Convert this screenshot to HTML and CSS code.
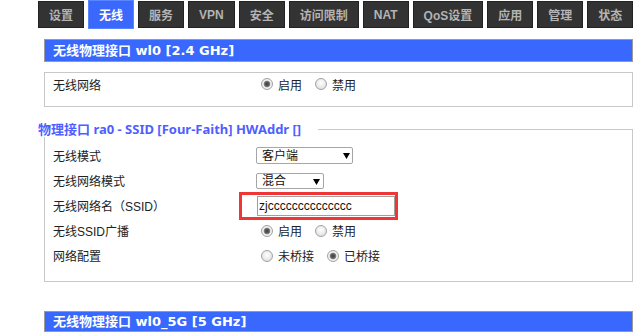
FILE: index.html
```html
<!DOCTYPE html>
<html lang="zh-CN">
<head>
<meta charset="utf-8">
<title>无线设置</title>
<link rel="stylesheet" href="styles.css">
</head>
<body>
<nav class="tabs">
  <a class="tab">设置</a>
  <a class="tab tab-active">无线</a>
  <a class="tab">服务</a>
  <a class="tab">VPN</a>
  <a class="tab">安全</a>
  <a class="tab">访问限制</a>
  <a class="tab">NAT</a>
  <a class="tab">QoS设置</a>
  <a class="tab">应用</a>
  <a class="tab">管理</a>
  <a class="tab">状态</a>
</nav>
<main class="content">
  <div class="bar">无线物理接口 wl0 [2.4 GHz]</div>

  <fieldset class="box box-plain">
    <div class="row row-short">
      <span class="label">无线网络</span>
      <span class="value">
        <input class="radio" type="radio" name="net" checked><span class="opt">启用</span>
        <input class="radio" type="radio" name="net"><span class="opt">禁用</span>
      </span>
    </div>
  </fieldset>

  <fieldset class="box box-legend">
    <legend class="legend">物理接口 ra0 - SSID [Four-Faith] HWAddr []</legend>
    <div class="row">
      <span class="label">无线模式</span>
      <span class="value"><select class="select select-wide"><option>客户端</option></select></span>
    </div>
    <div class="row">
      <span class="label">无线网络模式</span>
      <span class="value"><select class="select select-narrow"><option>混合</option></select></span>
    </div>
    <div class="row row-ssid">
      <span class="label">无线网络名（SSID）</span>
      <span class="value"><input class="text" type="text" value="zjcccccccccccccc"></span>
      <span class="highlight"></span>
    </div>
    <div class="row">
      <span class="label">无线SSID广播</span>
      <span class="value">
        <input class="radio" type="radio" name="bc" checked><span class="opt">启用</span>
        <input class="radio" type="radio" name="bc"><span class="opt">禁用</span>
      </span>
    </div>
    <div class="row">
      <span class="label">网络配置</span>
      <span class="value">
        <input class="radio" type="radio" name="br"><span class="opt">未桥接</span>
        <input class="radio" type="radio" name="br" checked><span class="opt">已桥接</span>
      </span>
    </div>
  </fieldset>

  <div class="bar bar-bottom">无线物理接口 wl0_5G [5 GHz]</div>
</main>
</body>
</html>
```

FILE: styles.css
```css
html, body {
  margin: 0;
  padding: 0;
  background: #fff;
}

body {
  font-family: "Liberation Sans", "Noto Sans CJK SC", sans-serif;
  font-size: 12px;
  color: #222;
  overflow: hidden;
  text-spacing-trim: space-all;
}

.tabs {
  display: flex;
  align-items: flex-start;
  padding: 1px 0 0 38px;
  height: 27px;
  white-space: nowrap;
}

.tab {
  flex: none;
  display: flex;
  align-items: center;
  justify-content: center;
  height: 25px;
  padding: 0 10px;
  margin-right: 4px;
  background: #333;
  border: 1px solid #222;
  color: #b4b4b4;
  font-family: "Liberation Sans", "Noto Sans CJK SC", sans-serif;
  font-weight: bold;
  font-size: 12px;
}

.tab-active {
  height: 27px;
  margin-top: -1px;
  background: #3a68fd;
  border-color: #5a85ff;
  color: #fff;
}

.content {
  margin-left: 44px;
  width: 589px;
}

.bar {
  margin-top: 11px;
  height: 21px;
  box-sizing: content-box;
  line-height: 21px;
  padding-left: 8px;
  background: #3868fd;
  border: 1px solid #9a9a9a;
  color: #fff;
  font-family: "DejaVu Sans", "Noto Sans CJK SC", sans-serif;
  font-weight: bold;
  font-size: 13px;
  white-space: nowrap;
}

.bar-bottom {
  margin-top: 29px;
  height: 19px;
  line-height: 19px;
}

.box {
  margin: 0;
  min-width: 0;
  border: 1px solid #c8c8c8;
  padding: 0 8px;
}

.box-plain {
  margin-top: 10px;
  padding-bottom: 11px;
}

.box-legend {
  margin-top: 14px;
  padding-top: 6px;
  padding-bottom: 13px;
}

.legend {
  margin-left: -15px;
  padding: 0 17px 0 0;
  line-height: 16px;
  color: #4f5eff;
  font-family: "Noto Sans", "Noto Sans CJK SC", sans-serif;
  font-weight: bold;
  font-size: 13px;
  white-space: nowrap;
}

.row {
  position: relative;
  display: flex;
  align-items: center;
  height: 25px;
}

.row-short {
  height: 22px;
}

.label {
  flex: none;
  width: 203px;
  white-space: nowrap;
}

.value {
  display: flex;
  align-items: center;
  white-space: nowrap;
}

.opt {
  margin-right: 8px;
}

.radio {
  -webkit-appearance: none;
  appearance: none;
  flex: none;
  width: 12px;
  height: 12px;
  margin: 0 5px;
  border: 1px solid #a2a2a2;
  border-radius: 50%;
  background: radial-gradient(circle at 50% 40%, #ffffff 0, #f0f0f0 40%, #d6d6d6 100%);
  box-sizing: border-box;
}

.radio:checked {
  background: radial-gradient(circle, #3e3e3e 0, #5c5c5c 2px, #8a8a8a 3px, #e4e4e4 3.6px, #f4f4f4 4.3px, #d2d2d2 100%);
}

.select {
  -webkit-appearance: none;
  appearance: none;
  box-sizing: border-box;
  margin: 0;
  padding: 0 0 0 5px;
  border: 1px solid #a6a6a6;
  border-radius: 2px;
  background-color: #fff;
  background-image: url("data:image/svg+xml;utf8,<svg xmlns='http://www.w3.org/2000/svg' width='7' height='6'><path d='M0 0h7L3.5 6z' fill='%23000'/></svg>");
  background-repeat: no-repeat;
  font-family: "Liberation Sans", "Noto Sans CJK SC", sans-serif;
  font-size: 12px;
  color: #111;
  line-height: 14px;
}

.select-wide {
  width: 97px;
  height: 17px;
  background-position: 86px 5px;
}

.select-narrow {
  width: 68px;
  height: 16px;
  background-position: 56px 5px;
}

.text {
  box-sizing: border-box;
  width: 138px;
  height: 20px;
  margin: 0 0 0 1px;
  padding: 0 1px;
  border: 1px solid #a0a0a0;
  font-family: "Liberation Sans", "Noto Sans CJK SC", sans-serif;
  font-size: 12px;
  color: #111;
  outline: none;
}

.highlight {
  position: absolute;
  left: 186px;
  top: -1px;
  width: 159px;
  height: 28px;
  box-sizing: border-box;
  border: 3px solid #ee3636;
  pointer-events: none;
}
```
